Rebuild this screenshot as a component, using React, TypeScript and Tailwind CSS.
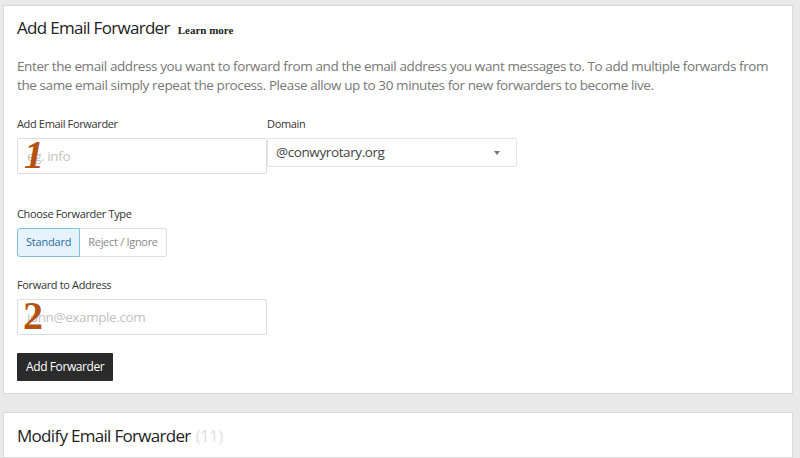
import React from "react";

const font = { fontFamily: '"Open Sans", "Liberation Sans", sans-serif' };
const serif = { fontFamily: '"Liberation Serif", "Times New Roman", serif' };

export default function App() {
  return (
    <div className="w-[800px] h-[458px] overflow-hidden bg-[#e9e9e9] pl-[3px] pr-[7px] pt-[5px] flex flex-col gap-[18px]" style={font}>
      <div className="bg-white border border-[#d9d9d9] px-[13px] pt-[9px] pb-[12px] relative">
        <div className="flex items-baseline gap-[8px]">
          <h1 className="text-[17px] tracking-[-0.7px] text-[#222] leading-[26px]">Add Email Forwarder</h1>
          <span className="text-[11px] font-bold text-[#222]" style={serif}>Learn more</span>
        </div>
        <p className="mt-[16px] text-[13.5px] tracking-[-0.4px] leading-[19px] text-[#777] pr-[10px]">
          Enter the email address you want to forward from and the email address you want messages to. To add multiple forwards from the same email simply repeat the process. Please allow up to 30 minutes for new forwarders to become live.
        </p>
        <div className="mt-[22px] flex">
          <div className="w-[250px]">
            <div className="text-[11px] tracking-[-0.35px] text-[#333] leading-[14px]">Add Email Forwarder</div>
            <div className="relative mt-[7px] h-[36px] border border-[#ddd] rounded-[2px] flex items-center pl-[9px]">
              <span className="text-[13.5px] tracking-[-0.4px] text-[#c2c2c2]">eg. info</span>
              <span className="absolute left-[6px] top-[-4px] text-[40px] font-bold italic text-[#b5520f] leading-none" style={serif}>1</span>
            </div>
          </div>
          <div className="w-[250px]">
            <div className="text-[11px] tracking-[-0.35px] text-[#333] leading-[14px]">Domain</div>
            <div className="mt-[7px] h-[29px] border border-[#e3e3e3] rounded-[2px] flex items-center justify-between pl-[8px] pr-[16px]">
              <span className="text-[13.5px] tracking-[-0.4px] text-[#444]">@conwyrotary.org</span>
              <span className="w-0 h-0 border-l-[3px] border-r-[3px] border-t-[4px] border-l-transparent border-r-transparent border-t-[#777]" />
            </div>
          </div>
        </div>
        <div className="mt-[33px] text-[11px] tracking-[-0.35px] text-[#333] leading-[14px]">Choose Forwarder Type</div>
        <div className="mt-[7px] flex">
          <div className="h-[29px] px-[8px] flex items-center bg-[#e6f3fc] border border-[#7cc0e0] rounded-l-[3px] text-[11px] tracking-[-0.2px] text-[#2a6aa6]">Standard</div>
          <div className="h-[29px] px-[8px] flex items-center border border-l-0 border-[#ddd] rounded-r-[3px] text-[11px] tracking-[-0.3px] text-[#888]">Reject / Ignore</div>
        </div>
        <div className="mt-[21px] text-[11px] tracking-[-0.35px] text-[#333] leading-[14px]">Forward to Address</div>
        <div className="relative mt-[7px] w-[250px] h-[36px] border border-[#ddd] rounded-[2px] flex items-center pl-[9px]">
          <span className="text-[13.5px] tracking-[-0.4px] text-[#c2c2c2]">john@example.com</span>
          <span className="absolute left-[5px] top-[-4px] text-[40px] font-bold text-[#b5520f] leading-none" style={serif}>2</span>
        </div>
        <button className="mt-[18px] h-[28px] px-[9px] bg-[#2b2b2b] text-white text-[12px] tracking-[-0.4px] rounded-[1px]">Add Forwarder</button>
      </div>
      <div className="bg-white border border-[#d9d9d9] px-[13px] pt-[10px] h-[60px]">
        <div className="flex items-baseline gap-[5px]">
          <h2 className="text-[17px] tracking-[-0.7px] text-[#222] leading-[26px]">Modify Email Forwarder</h2>
          <span className="text-[17px] tracking-[-0.6px] text-[#e2e2e2]">(11)</span>
        </div>
      </div>
    </div>
  );
}
